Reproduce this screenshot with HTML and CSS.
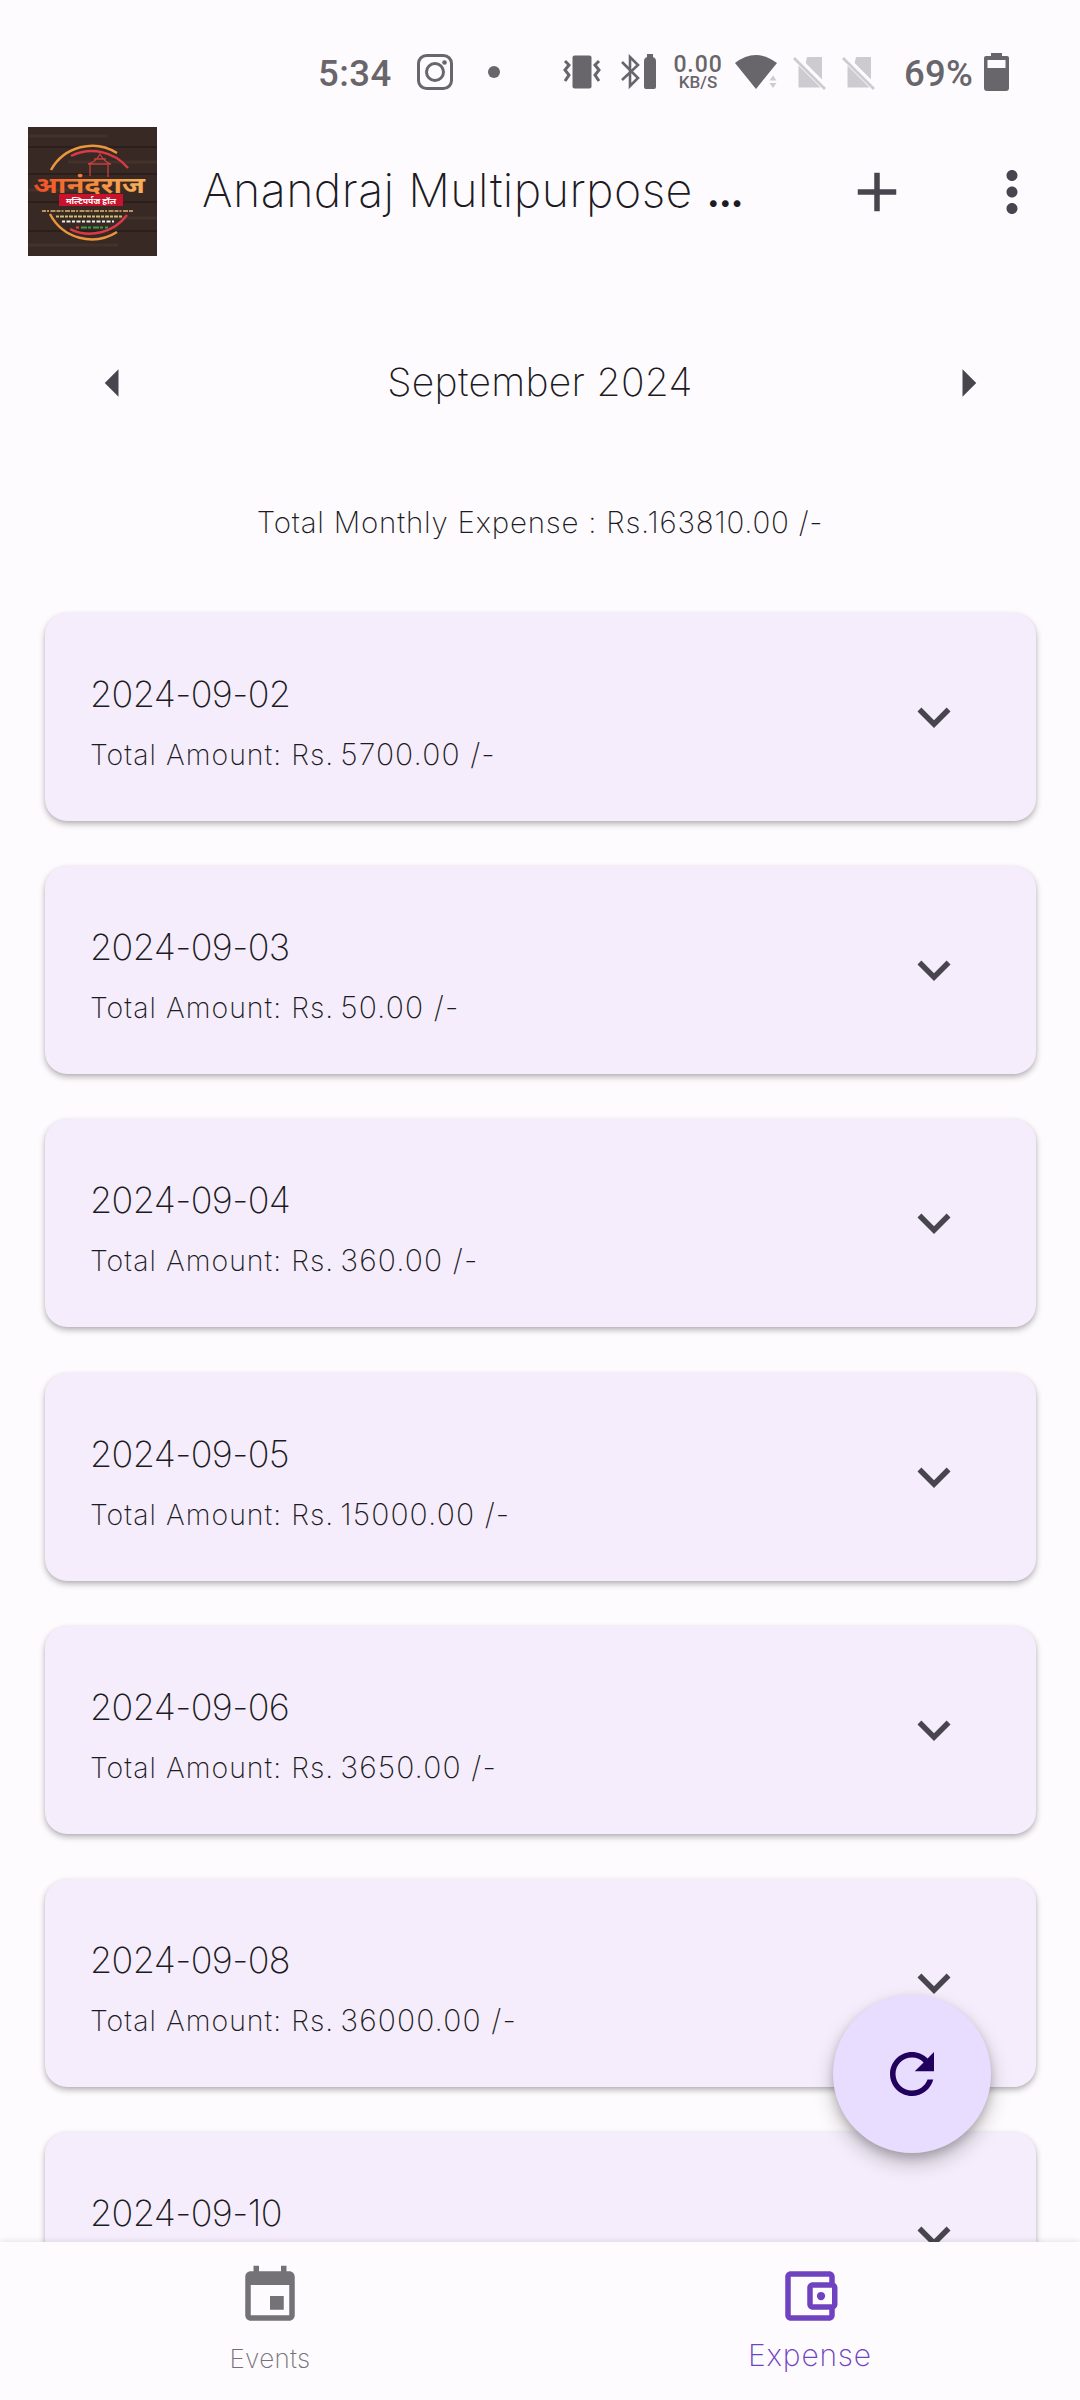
FILE: index.html
```html
<!DOCTYPE html>
<html lang="en">
<head>
<meta charset="utf-8">
<title>Anandraj Multipurpose Hall</title>
<link rel="stylesheet" href="styles.css">
</head>
<body>
<svg class="defs" aria-hidden="true">
  <symbol id="chevron" viewBox="0 0 24 24"><path d="M16.59 8.59L12 13.17 7.41 8.59 6 10l6 6 6-6z"/></symbol>
</svg>
<div class="screen">
  <header class="status">
    <span class="clock">5:34</span>
    <svg class="insta" viewBox="0 0 36 36"><rect x="1.5" y="1.5" width="33" height="33" rx="8"/><circle cx="18" cy="18" r="8.5"/><circle class="solid" cx="27.5" cy="8.5" r="2.3"/></svg>
    <span class="dot"></span>
    <svg class="vibrate" viewBox="0 0 38 36"><rect class="solid" x="9.500" y="1.500" width="19" height="33" rx="2"/><path d="M2 7l4 4-4 5 4 5-4 6M36 7l-4 4 4 5-4 5 4 6"/></svg>
    <svg class="bt" viewBox="0 0 36 36"><path d="M1 8l16 16-8 8V3l8 8L1 26"/><path class="solid" d="M26 0h6v3q3 1 3 4v26q0 2-2 2h-8q-2 0-2-2V7q0-3 3-4z"/></svg>
    <span class="speed"><b>0.00</b><small>KB/S</small></span>
    <svg class="wifi" viewBox="0 0 42 36"><path d="M0 9Q20.500-7 42 9L21 35z"/><path class="pale" d="M34.500 26.500l3.500-5 3.500 5zM34.500 29h7l-3.500 5z"/></svg>
    <svg class="sim" viewBox="0 0 33 36"><path d="M14 3h15v23L12.500 9.500zM5.500 11.500l22 22h-22zM0 5l2-2 31 31-2 2z"/><path class="slit" d="M4 2.500l28 28"/></svg>
    <svg class="sim" viewBox="0 0 33 36"><path d="M14 3h15v23L12.500 9.500zM5.500 11.500l22 22h-22zM0 5l2-2 31 31-2 2z"/><path class="slit" d="M4 2.500l28 28"/></svg>
    <span class="percent">69%</span>
    <svg class="battery" viewBox="0 0 25 38"><path fill-rule="evenodd" d="M7 0h11v3h5q2 0 2 2v30q0 3-3 3H3q-3 0-3-3V5q0-2 2-2h5zM3.500 7v8h18V7z"/></svg>
  </header>

  <div class="appbar">
    <svg class="logo" viewBox="0 0 129 129">
      <defs><linearGradient id="flame"><stop offset="0" stop-color="#f04a24"/><stop offset=".5" stop-color="#f58a3c"/><stop offset="1" stop-color="#f6b25c"/></linearGradient></defs>
      <rect width="129" height="129" fill="#382924"/>
      <path d="M0 20h129M0 47h129M0 75h129M0 104h129" stroke="#291c18" stroke-width="1.500"/>
      <path d="M0 9h80M40 35h89M0 63h60M70 91h59M0 118h90" stroke="#43322b" stroke-width="3"/>
      <path d="M23 43A47 47 0 0 1 89 26M22 87a47 47 0 0 0 67 18" fill="none" stroke="#e9963c" stroke-width="2.500"/>
      <path d="M43 29a47 47 0 0 1 57 12M42 102a46 46 0 0 0 57-14" fill="none" stroke="#d93a48" stroke-width="2.500"/>
      <path d="M60 37q8-2 12-10 4 8 11 10zM62 37v12M80 37v13M66 32h12" fill="none" stroke="#c2403f" stroke-width="1.300"/>
      <text class="brand" x="5" y="66" textLength="112" lengthAdjust="spacingAndGlyphs" fill="url(#flame)">आनंदराज</text>
      <rect x="31" y="67" width="64" height="12" fill="#c9122c"/>
      <text class="sub" x="38" y="76.500" textLength="50" lengthAdjust="spacingAndGlyphs">मल्टिपर्पज हॉल</text>
      <g fill="none" stroke-width="2.200">
        <path d="M14 84h92" stroke="#b9935c" stroke-dasharray="4 1 2 1.500 5 1"/>
        <path d="M28 89.500h66" stroke="#c9c26c" stroke-dasharray="3 1 4 1"/>
        <path d="M34 94.500h52" stroke="#efece8" stroke-dasharray="3 1.500 4 1.500"/>
        <path d="M53 100.500h27" stroke="#35a448" stroke-dasharray="6 1 3 2"/>
        <path d="M48 100.500h3" stroke="#e0433f"/>
      </g>
    </svg>
    <h1 class="title">Anandraj Multipurpose <span>...</span></h1>
    <svg class="icon add" viewBox="0 0 24 24"><path d="M19 13h-6v6h-2v-6H5v-2h6V5h2v6h6v2z"/></svg>
    <svg class="icon more" viewBox="0 0 24 24"><path d="M12 8c1.100 0 2-.9 2-2s-.9-2-2-2-2 .9-2 2 .9 2 2 2zm0 2c-1.100 0-2 .9-2 2s.9 2 2 2 2-.9 2-2-.9-2-2-2zm0 6c-1.100 0-2 .9-2 2s.9 2 2 2 2-.9 2-2-.9-2-2-2z"/></svg>
  </div>

  <div class="month">
    <svg class="icon" viewBox="0 0 24 24"><path d="M14 7l-5 5 5 5z"/></svg>
    <span class="month-name">September 2024</span>
    <svg class="icon" viewBox="0 0 24 24"><path d="M10 17l5-5-5-5z"/></svg>
  </div>
  <p class="total">Total Monthly Expense : Rs.163810.00 /-</p>

  <main class="list">
    <article class="card"><div><h2>2024-09-02</h2><p>Total Amount: Rs. <span>5700.00 /-</span></p></div><svg class="icon"><use href="#chevron"/></svg></article>
    <article class="card"><div><h2>2024-09-03</h2><p>Total Amount: Rs. <span>50.00 /-</span></p></div><svg class="icon"><use href="#chevron"/></svg></article>
    <article class="card"><div><h2>2024-09-04</h2><p>Total Amount: Rs. <span>360.00 /-</span></p></div><svg class="icon"><use href="#chevron"/></svg></article>
    <article class="card"><div><h2>2024-09-05</h2><p>Total Amount: Rs. <span>15000.00 /-</span></p></div><svg class="icon"><use href="#chevron"/></svg></article>
    <article class="card"><div><h2>2024-09-06</h2><p>Total Amount: Rs. <span>3650.00 /-</span></p></div><svg class="icon"><use href="#chevron"/></svg></article>
    <article class="card"><div><h2>2024-09-08</h2><p>Total Amount: Rs. <span>36000.00 /-</span></p></div><svg class="icon"><use href="#chevron"/></svg></article>
    <article class="card"><div><h2>2024-09-10</h2></div><svg class="icon"><use href="#chevron"/></svg></article>
  </main>

  <nav class="tabs">
    <a class="tab"><svg class="icon" viewBox="0 0 24 24"><path d="M17 12h-5v5h5v-5zM16 1v2H8V1H6v2H5c-1.110 0-1.990.9-1.990 2L3 19c0 1.100.89 2 2 2h14c1.100 0 2-.9 2-2V5c0-1.100-.9-2-2-2h-1V1h-2zm3 18H5V8h14v11z"/></svg><span>Events</span></a>
    <a class="tab active"><svg class="icon" viewBox="0 0 24 24"><path d="M21 7.280V5c0-1.100-.9-2-2-2H5c-1.110 0-2 .9-2 2v14c0 1.100.89 2 2 2h14c1.100 0 2-.9 2-2v-2.280c.59-.35 1-.98 1-1.720V9c0-.74-.41-1.370-1-1.720zM20 9v6h-7V9h7zM5 19V5h14v2h-6c-1.100 0-2 .9-2 2v6c0 1.100.9 2 2 2h6v2H5z"/><circle cx="16" cy="12" r="1.500"/></svg><span>Expense</span></a>
  </nav>
  <button class="fab" aria-label="Refresh"><svg class="icon" viewBox="0 0 24 24"><path d="M17.650 6.350C16.200 4.900 14.210 4 12 4c-4.420 0-7.990 3.580-7.990 8s3.570 8 7.990 8c3.730 0 6.840-2.550 7.730-6h-2.080c-.82 2.330-3.040 4-5.650 4-3.310 0-6-2.690-6-6s2.690-6 6-6c1.660 0 3.140.69 4.220 1.780L13 11h7V4l-2.350 2.350z"/></svg></button>
</div>
</body>
</html>
```
FILE: styles.css
```css
* { box-sizing: border-box; }
body { margin: 0; background: #fefbff; font-family: Inter, "Noto Sans", sans-serif; font-weight: 200; color: #1c1b1f; }
h1, h2, p { margin: 0; font-weight: 200; }
.defs { display: none; }
.screen { position: relative; width: 1080px; height: 2400px; overflow: hidden; display: flex; flex-direction: column; }
.icon { width: 66px; height: 66px; flex: none; fill: #49454f; }

.status { height: 110px; flex: none; display: flex; align-items: flex-start; padding: 54px 0 0 318px; color: #69666b; fill: #69666b; font-family: Roboto, sans-serif; font-weight: 480; }
.status svg { flex: none; height: 36px; }
.clock, .percent { font-size: 36.500px; line-height: 39px; white-space: nowrap; }
.clock { width: 99px; letter-spacing: .5px; }
.insta { width: 36px; }
.insta, .vibrate, .bt { fill: none; stroke: #69666b; stroke-width: 3; }
.status .solid { fill: #69666b; stroke: none; }
.dot { width: 12px; height: 12px; margin: 12px 0 0 35px; border-radius: 50%; background: #69666b; }
.vibrate { width: 38px; margin-left: 63px; }
.bt { width: 36px; margin-left: 20px; stroke-width: 2.6; }
.speed { width: 54px; margin-left: 14px; display: flex; flex-direction: column; align-items: center; }
.speed b { font-weight: 480; font-size: 23px; line-height: 21px; letter-spacing: .9px; }
.speed small { font-weight: 500; font-size: 17px; line-height: 15px; }
.wifi { width: 42px; margin-left: 10px; }
.pale, .sim { fill: #cecbd0; }
.sim { width: 33px; margin-left: 16px; }
.slit { fill: none; stroke: #fefbff; stroke-width: 3; }
.percent { width: 80px; margin-left: 29px; letter-spacing: .2px; }
.status .battery { width: 25px; height: 38px; margin-top: -1px; }

.appbar { height: 164px; flex: none; display: flex; align-items: center; padding-left: 28px; }
.logo { width: 129px; height: 129px; flex: none; margin-top: -2px; }
.brand { font: 700 22px "Noto Sans", "Noto Sans Devanagari", sans-serif; }
.sub { font: 700 8.500px "Noto Sans", "Noto Sans Devanagari", sans-serif; fill: #fff; }
.title { width: 642px; padding-left: 45px; margin-top: -4px; font-size: 46.500px; line-height: 60px; white-space: nowrap; letter-spacing: .45px; }
.title span { font-weight: 500; letter-spacing: -2.300px; }
.add { margin-left: 45px; }
.more { margin-left: 69px; }

.month { height: 132px; flex: none; margin-top: 43px; padding: 0 79.500px; display: flex; align-items: center; justify-content: space-between; }
.month-name { font-size: 39px; line-height: 50px; margin-top: -3px; letter-spacing: .3px; }
.total { height: 60px; flex: none; margin-top: 43px; text-align: center; font-size: 29.500px; line-height: 60px; letter-spacing: .78px; }

.list { flex: 1; min-height: 0; padding: 61px 44.500px 0 45px; overflow: hidden; display: flex; flex-direction: column; gap: 45.200px; }
.card { height: 208px; flex: none; display: flex; justify-content: space-between; padding: 51px 68.500px 0 45px; border-radius: 22px; background: #f5edfb; box-shadow: 0 3px 6px rgba(0,0,0,.28), 0 1px 3px rgba(0,0,0,.06); }
.card h2 { font-size: 36px; line-height: 60px; letter-spacing: -.6px; }
.card p { font-size: 28.500px; line-height: 60px; letter-spacing: 1px; }
.card p span { margin-left: -3px; font-size: 30px; letter-spacing: 1.100px; }
.card .icon { margin-top: 20px; }

.tabs { position: relative; height: 158px; flex: none; display: flex; background: #fefbff; box-shadow: 0 -1px 6px rgba(0,0,0,.1); }
.tab { flex: 1; display: flex; flex-direction: column; align-items: center; padding-top: 21px; font-size: 26px; letter-spacing: .3px; color: #747277; }
.tab .icon { fill: #747277; }
.tab span { line-height: 40px; margin-top: 10px; }
.tab.active { font-size: 30px; letter-spacing: .8px; color: #6f43c0; }
.tab.active .icon { fill: #6f43c0; }
.tab.active span { margin-top: 6px; }

.fab { position: absolute; left: 832.500px; top: 1994.500px; width: 158px; height: 158px; border: 0; padding: 0; border-radius: 50%; background: #e9ddff; display: flex; align-items: center; justify-content: center; box-shadow: 0 10px 20px rgba(0,0,0,.24), 0 4px 9px rgba(0,0,0,.16); }
.fab .icon { fill: #22005d; }
```
